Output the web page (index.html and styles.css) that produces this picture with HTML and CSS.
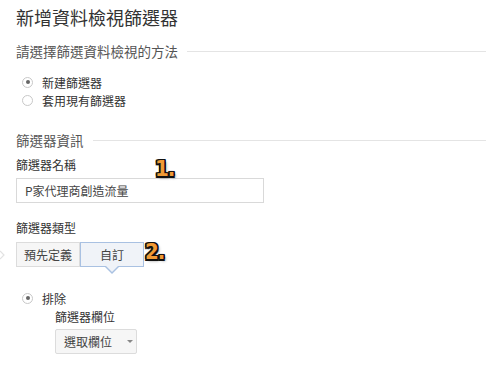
FILE: index.html
```html
<!DOCTYPE html>
<html>

<head>
    <meta charset="UTF-8">
    <meta name="viewport" content="width=device-width, initial-scale=1.0">
    <title>新增資料檢視篩選器</title>
    <link rel="stylesheet" href="styles.css">
</head>

<body>
    <div class="page">
        <h1 class="title">新增資料檢視篩選器</h1>

        <div class="section-head">請選擇篩選資料檢視的方法</div>
        <div class="radio-list">
            <label class="radio-row"><span class="radio checked"></span>新建篩選器</label>
            <label class="radio-row"><span class="radio"></span>套用現有篩選器</label>
        </div>

        <div class="section-head second">篩選器資訊</div>
        <div class="field-label">篩選器名稱</div>
        <input class="text-input" type="text" value="P家代理商創造流量">

        <div class="field-label type-label">篩選器類型</div>
        <div class="tabs">
            <button class="tab">預先定義</button>
            <button class="tab selected">自訂</button>
        </div>

        <label class="radio-row exclude"><span class="radio checked"></span>排除</label>
        <div class="sub-field">
            <div class="field-label">篩選器欄位</div>
            <button class="dropdown">選取欄位<span class="caret"></span></button>
        </div>

        <span class="marker marker-one">1.</span>
        <span class="marker marker-two">2.</span>
        <svg class="side-arrow" width="6" height="10" viewBox="0 0 6 10">
            <path d="M1 1 L5 5 L1 9" fill="none" stroke="#e2e2e2" stroke-width="1.2" />
        </svg>
    </div>
</body>

</html>
```

FILE: styles.css
```css
body {
    margin: 0;
    background-color: white;
    font-family: "Noto Sans CJK TC", "Liberation Sans", sans-serif;
    color: #333;
}

.page {
    position: relative;
    padding: 5px 0 0 16px;
    height: 362px;
}

.title {
    margin: 0;
    font-size: 18px;
    font-weight: normal;
    line-height: 24px;
    color: #333;
}

.section-head {
    display: flex;
    align-items: center;
    margin-top: 12px;
    font-size: 13.5px;
    line-height: 20px;
    color: #555;
}

.section-head::after {
    content: "";
    flex: 1;
    height: 1px;
    margin-left: 9px;
    background-color: #e4e4e4;
}

.section-head.second {
    margin-top: 21px;
}

.radio-list {
    margin-top: 12px;
}

.radio-row {
    display: flex;
    align-items: center;
    height: 18px;
    margin-left: 6px;
    font-size: 12px;
    color: #333;
}

.radio {
    box-sizing: border-box;
    width: 11px;
    height: 11px;
    margin-right: 9px;
    border: 1px solid #c8c8c8;
    border-radius: 50%;
    display: flex;
    align-items: center;
    justify-content: center;
}

.radio.checked::after {
    content: "";
    width: 4px;
    height: 4px;
    border-radius: 50%;
    background-color: #666;
}

.field-label {
    margin-top: 7px;
    font-size: 12px;
    line-height: 16px;
    color: #333;
}

.text-input {
    box-sizing: border-box;
    display: block;
    width: 248px;
    height: 25px;
    margin-top: 5px;
    padding: 0 8px;
    border: 1px solid #d9d9d9;
    font-family: inherit;
    font-size: 12px;
    color: #444;
    outline: none;
}

.type-label {
    margin-top: 17px;
}

.tabs {
    display: flex;
    margin-top: 6px;
}

.tab {
    position: relative;
    box-sizing: border-box;
    width: 64px;
    height: 25px;
    padding: 0;
    border: 1px solid #dcdcdc;
    background-color: #f6f6f6;
    font-family: inherit;
    font-size: 12px;
    color: #444;
}

.tab.selected {
    border-color: #a9c1e2;
    background-color: #f0f3f8;
}

.tab.selected::before,
.tab.selected::after {
    content: "";
    position: absolute;
    left: 50%;
    border-style: solid;
    border-color: transparent;
}

.tab.selected::before {
    top: 24px;
    margin-left: -7px;
    border-width: 7px 7px 0 7px;
    border-top-color: #a9c1e2;
}

.tab.selected::after {
    top: 23px;
    margin-left: -6px;
    border-width: 6px 6px 0 6px;
    border-top-color: #f0f3f8;
}

.exclude {
    margin-top: 22px;
}

.sub-field {
    margin-left: 39px;
}

.sub-field .field-label {
    margin-top: 2px;
}

.dropdown {
    box-sizing: border-box;
    display: flex;
    align-items: center;
    width: 82px;
    height: 25px;
    margin-top: 4px;
    padding: 0 0 0 8px;
    border: 1px solid #dcdcdc;
    border-radius: 2px;
    background-color: #f6f6f6;
    font-family: inherit;
    font-size: 12px;
    color: #444;
}

.caret {
    margin-left: 15px;
    border-style: solid;
    border-width: 3px 3px 0 3px;
    border-color: #888 transparent transparent transparent;
}

.marker {
    position: absolute;
    font-family: "DejaVu Sans Condensed", "DejaVu Sans", sans-serif;
    font-weight: bold;
    font-size: 22px;
    line-height: 22px;
    letter-spacing: -1px;
    color: #f09a35;
    text-shadow:
        -1.5px -1.5px 0 #111, 1.5px -1.5px 0 #111,
        -1.5px 1.5px 0 #111, 1.5px 1.5px 0 #111,
        0 -1.5px 0 #111, 0 1.5px 0 #111,
        -1.5px 0 0 #111, 1.5px 0 0 #111,
        2px 2px 3px rgba(0, 0, 0, 0.4);
}

.marker-one {
    left: 155px;
    top: 158px;
}

.marker-two {
    left: 145px;
    top: 241px;
}

.side-arrow {
    position: absolute;
    left: -1px;
    top: 250px;
}
```
